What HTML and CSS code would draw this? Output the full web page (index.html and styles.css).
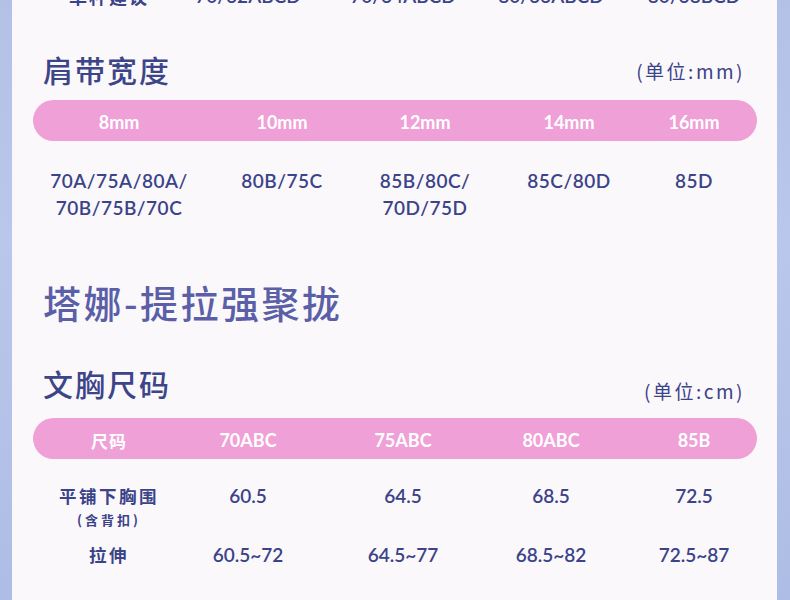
FILE: index.html
```html
<!DOCTYPE html>
<html lang="zh">
<head>
<meta charset="utf-8">
<link rel="stylesheet" href="styles.css">
</head>
<body>
<div class="card">
  <div class="grid g2 top-row">
    <div class="cell cjk">单杯建议</div>
    <div class="cell">70/62ABCD</div>
    <div class="cell">70/64ABCD</div>
    <div class="cell">80/66ABCD</div>
    <div class="cell">80/68BCD</div>
  </div>

  <div class="heading h1">
    <h2 class="title">肩带宽度</h2>
    <span class="unit">(单位:mm)</span>
  </div>
  <div class="bar grid g1">
    <div class="cell">8mm</div>
    <div class="cell">10mm</div>
    <div class="cell">12mm</div>
    <div class="cell">14mm</div>
    <div class="cell">16mm</div>
  </div>
  <div class="grid g1 row1">
    <div class="cell">70A/75A/80A/<br>70B/75B/70C</div>
    <div class="cell">80B/75C</div>
    <div class="cell">85B/80C/<br>70D/75D</div>
    <div class="cell">85C/80D</div>
    <div class="cell">85D</div>
  </div>

  <h1 class="big">塔娜-提拉强聚拢</h1>

  <div class="heading h2">
    <h2 class="title">文胸尺码</h2>
    <span class="unit unit2">(单位:cm)</span>
  </div>
  <div class="bar grid g2">
    <div class="cell cjk">尺码</div>
    <div class="cell">70ABC</div>
    <div class="cell">75ABC</div>
    <div class="cell">80ABC</div>
    <div class="cell">85B</div>
  </div>
  <div class="grid g2 row2">
    <div class="cell cjk label">平铺下胸围<span class="sub">(含背扣)</span></div>
    <div class="cell">60.5</div>
    <div class="cell">64.5</div>
    <div class="cell">68.5</div>
    <div class="cell">72.5</div>
  </div>
  <div class="grid g2 row3">
    <div class="cell cjk label">拉伸</div>
    <div class="cell">60.5~72</div>
    <div class="cell">64.5~77</div>
    <div class="cell">68.5~82</div>
    <div class="cell">72.5~87</div>
  </div>
</div>
</body>
</html>
```

FILE: styles.css
```css
html, body {
  margin: 0;
  padding: 0;
  height: 600px;
  overflow: hidden;
}
body {
  background: linear-gradient(180deg, #b3c1e7 0%, #bac7ec 40%, #aebde5 100%);
  font-family: "Lato", "Noto Sans CJK SC", sans-serif;
  color: #3b4389;
}
.card {
  margin: 0 13px 0 12px;
  background: #faf8fa;
  padding: 0 20px 0 21px;
  height: 640px;
}
.grid {
  display: grid;
  text-align: center;
}
.g1 {
  grid-template-columns: 172px 154px 132px 156px 94px;
}
.g2 {
  padding-left: 24px;
  grid-template-columns: 104px 174px 136px 160px 126px;
}
.cell {
  white-space: nowrap;
}
.cjk {
  font-family: "Noto Sans CJK SC", sans-serif;
}
.top-row {
  margin-top: -16px;
  line-height: 24px;
  font-size: 19px;
  font-weight: 600;
}
.top-row .cjk {
  font-size: 18px;
  letter-spacing: 2px;
}
.heading {
  display: flex;
  justify-content: space-between;
  align-items: center;
  padding: 0 12px 0 10px;
}
.h1 {
  margin-top: 43px;
}
.h2 {
  margin-top: 39px;
}
.title {
  margin: 0;
  font-family: "Noto Sans CJK SC", sans-serif;
  font-size: 30px;
  line-height: 36px;
  font-weight: 500;
  letter-spacing: 2px;
  color: #3d4589;
}
.unit {
  font-family: "Noto Sans CJK SC", sans-serif;
  font-size: 19px;
  line-height: 22px;
  letter-spacing: 2.5px;
  color: #3b4389;
  padding-top: 4px;
}
.unit2 {
  padding-top: 0;
  margin-top: 16px;
}
.bar {
  background: #efa0d6;
  border-radius: 21px;
  height: 41px;
  line-height: 41px;
  color: #ffffff;
  font-size: 18px;
  font-weight: 700;
}
.bar .cell {
  padding-top: 2px;
}
.h1 + .bar {
  margin-top: 13px;
}
.h2 + .bar {
  margin-top: 16px;
}
.bar .cjk {
  font-size: 17px;
  letter-spacing: 1px;
}
.row1 {
  margin-top: 26px;
  line-height: 27px;
  font-size: 19px;
  font-weight: 600;
  letter-spacing: 0.5px;
}
.big {
  margin: 58px 0 0 0;
  padding-left: 10px;
  font-family: "Noto Sans CJK SC", sans-serif;
  font-size: 38px;
  line-height: 46px;
  font-weight: 500;
  letter-spacing: 2.5px;
  color: #5b5fa7;
}
.row2, .row3 {
  align-items: start;
  line-height: 24px;
  font-size: 19px;
  font-weight: 600;
}
.row2 {
  margin-top: 25px;
}
.row3 {
  margin-top: 15px;
}
.label {
  font-size: 17.5px;
  font-weight: 700;
  letter-spacing: 2.5px;
}
.sub {
  display: block;
  margin-top: 4px;
  font-size: 13px;
  line-height: 16px;
  letter-spacing: 3px;
}
```
